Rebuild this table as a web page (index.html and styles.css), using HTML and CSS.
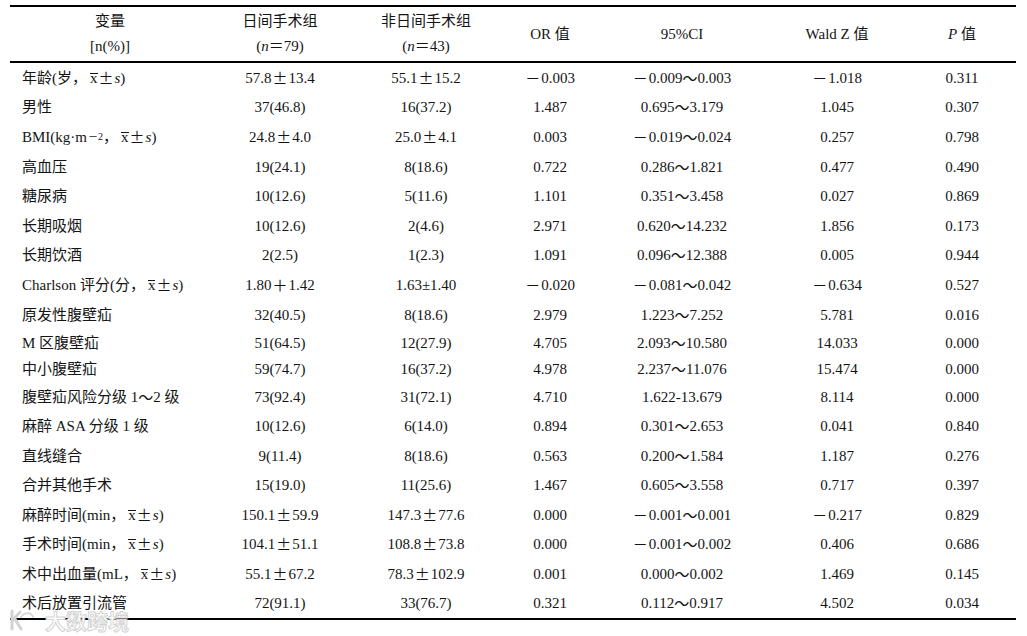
FILE: index.html
```html
<!DOCTYPE html>
<html lang="zh-CN">
<head>
<meta charset="utf-8">
<title>表</title>
<link rel="stylesheet" href="styles.css">
</head>
<body>
<div class="page">
  <div class="table">
    <div class="th lead"><span>变量</span><span>[n(%)]</span></div>
    <div class="th"><span>日间手术组</span><span>(<i>n</i>＝79)</span></div>
    <div class="th"><span>非日间手术组</span><span>(<i>n</i>＝43)</span></div>
    <div class="th">OR 值</div>
    <div class="th">95%CI</div>
    <div class="th">Wald Z 值</div>
    <div class="th"><span><i>P</i> 值</span></div>

    <div class="td name">年龄(岁，<span class="xb">x</span><span class="pm">±</span><i>s</i>)</div><div class="td">57.8<span class="pm">±</span>13.4</div><div class="td">55.1<span class="pm">±</span>15.2</div><div class="td"><span class="mn">－</span>0.003</div><div class="td"><span class="mn">－</span>0.009<span class="tl">～</span>0.003</div><div class="td"><span class="mn">－</span>1.018</div><div class="td">0.311</div>

    <div class="td name">男性</div><div class="td">37(46.8)</div><div class="td">16(37.2)</div><div class="td">1.487</div><div class="td">0.695<span class="tl">～</span>3.179</div><div class="td">1.045</div><div class="td">0.307</div>

    <div class="td name">BMI(kg·m<sup>－2</sup>，<span class="xb">x</span><span class="pm">±</span><i>s</i>)</div><div class="td">24.8<span class="pm">±</span>4.0</div><div class="td">25.0<span class="pm">±</span>4.1</div><div class="td">0.003</div><div class="td"><span class="mn">－</span>0.019<span class="tl">～</span>0.024</div><div class="td">0.257</div><div class="td">0.798</div>

    <div class="td name">高血压</div><div class="td">19(24.1)</div><div class="td">8(18.6)</div><div class="td">0.722</div><div class="td">0.286<span class="tl">～</span>1.821</div><div class="td">0.477</div><div class="td">0.490</div>

    <div class="td name">糖尿病</div><div class="td">10(12.6)</div><div class="td">5(11.6)</div><div class="td">1.101</div><div class="td">0.351<span class="tl">～</span>3.458</div><div class="td">0.027</div><div class="td">0.869</div>

    <div class="td name">长期吸烟</div><div class="td">10(12.6)</div><div class="td">2(4.6)</div><div class="td">2.971</div><div class="td">0.620<span class="tl">～</span>14.232</div><div class="td">1.856</div><div class="td">0.173</div>

    <div class="td name">长期饮酒</div><div class="td">2(2.5)</div><div class="td">1(2.3)</div><div class="td">1.091</div><div class="td">0.096<span class="tl">～</span>12.388</div><div class="td">0.005</div><div class="td">0.944</div>

    <div class="td name">Charlson 评分(分，<span class="xb">x</span><span class="pm">±</span><i>s</i>)</div><div class="td">1.80<span class="pm">＋</span>1.42</div><div class="td">1.63±1.40</div><div class="td"><span class="mn">－</span>0.020</div><div class="td"><span class="mn">－</span>0.081<span class="tl">～</span>0.042</div><div class="td"><span class="mn">－</span>0.634</div><div class="td">0.527</div>

    <div class="td name">原发性腹壁疝</div><div class="td">32(40.5)</div><div class="td">8(18.6)</div><div class="td">2.979</div><div class="td">1.223<span class="tl">～</span>7.252</div><div class="td">5.781</div><div class="td">0.016</div>

    <div class="td name">M 区腹壁疝</div><div class="td">51(64.5)</div><div class="td">12(27.9)</div><div class="td">4.705</div><div class="td">2.093<span class="tl">～</span>10.580</div><div class="td">14.033</div><div class="td">0.000</div>

    <div class="td name">中小腹壁疝</div><div class="td">59(74.7)</div><div class="td">16(37.2)</div><div class="td">4.978</div><div class="td">2.237<span class="tl">～</span>11.076</div><div class="td">15.474</div><div class="td">0.000</div>

    <div class="td name">腹壁疝风险分级 1<span class="tl">～</span>2 级</div><div class="td">73(92.4)</div><div class="td">31(72.1)</div><div class="td">4.710</div><div class="td">1.622-13.679</div><div class="td">8.114</div><div class="td">0.000</div>

    <div class="td name">麻醉 ASA 分级 1 级</div><div class="td">10(12.6)</div><div class="td">6(14.0)</div><div class="td">0.894</div><div class="td">0.301<span class="tl">～</span>2.653</div><div class="td">0.041</div><div class="td">0.840</div>

    <div class="td name">直线缝合</div><div class="td">9(11.4)</div><div class="td">8(18.6)</div><div class="td">0.563</div><div class="td">0.200<span class="tl">～</span>1.584</div><div class="td">1.187</div><div class="td">0.276</div>

    <div class="td name">合并其他手术</div><div class="td">15(19.0)</div><div class="td">11(25.6)</div><div class="td">1.467</div><div class="td">0.605<span class="tl">～</span>3.558</div><div class="td">0.717</div><div class="td">0.397</div>

    <div class="td name">麻醉时间(min，<span class="xb">x</span><span class="pm">±</span><i>s</i>)</div><div class="td">150.1<span class="pm">±</span>59.9</div><div class="td">147.3<span class="pm">±</span>77.6</div><div class="td">0.000</div><div class="td"><span class="mn">－</span>0.001<span class="tl">～</span>0.001</div><div class="td"><span class="mn">－</span>0.217</div><div class="td">0.829</div>

    <div class="td name">手术时间(min，<span class="xb">x</span><span class="pm">±</span><i>s</i>)</div><div class="td">104.1<span class="pm">±</span>51.1</div><div class="td">108.8<span class="pm">±</span>73.8</div><div class="td">0.000</div><div class="td"><span class="mn">－</span>0.001<span class="tl">～</span>0.002</div><div class="td">0.406</div><div class="td">0.686</div>

    <div class="td name">术中出血量(mL，<span class="xb">x</span><span class="pm">±</span><i>s</i>)</div><div class="td">55.1<span class="pm">±</span>67.2</div><div class="td">78.3<span class="pm">±</span>102.9</div><div class="td">0.001</div><div class="td">0.000<span class="tl">～</span>0.002</div><div class="td">1.469</div><div class="td">0.145</div>

    <div class="td name">术后放置引流管</div><div class="td">72(91.1)</div><div class="td">33(76.7)</div><div class="td">0.321</div><div class="td">0.112<span class="tl">～</span>0.917</div><div class="td">4.502</div><div class="td">0.034</div>
  </div>

  <div class="watermark">
    <svg class="wm-logo" width="26" height="24" viewBox="0 0 26 24">
      <path d="M3 3 L3 21 M3 13 L11 4 M6 11 L12 21" fill="none" stroke="#d2d2d2" stroke-width="3" stroke-linecap="round"/>
      <path d="M12 9 C15 4 22 4 24 9" fill="none" stroke="#d8d8d8" stroke-width="2" stroke-linecap="round"/>
    </svg>
    <span class="wm-text">大数跨境</span>
  </div>
</div>
</body>
</html>
```

FILE: styles.css
```css
html, body {
  margin: 0;
  padding: 0;
  background: #ffffff;
}

.page {
  position: relative;
  width: 1027px;
  height: 636px;
  padding-top: 5px;
  box-sizing: border-box;
  font-family: "Liberation Serif", "Noto Sans CJK SC", serif;
  font-size: 15px;
  color: #141414;
}

.table {
  display: grid;
  margin-left: 10px;
  width: 1006px;
  grid-template-columns: 200px 140px 152px 96px 168px 142px 108px;
  grid-template-rows: 56px repeat(9, 29.6px) 26.4px 26.4px repeat(8, 29.5px);
  border-top: 2px solid #000;
  border-bottom: 2px solid #000;
}

.th {
  box-sizing: border-box;
  border-bottom: 2px solid #000;
  display: flex;
  flex-direction: column;
  align-items: center;
  justify-content: center;
  line-height: 25px;
  white-space: nowrap;
}

.td {
  display: flex;
  align-items: center;
  justify-content: center;
  white-space: nowrap;
  line-height: 20px;
}

.td.name {
  justify-content: flex-start;
  padding-left: 12px;
}

i {
  font-style: italic;
}

.xb {
  position: relative;
  margin-left: 3px;
}

.xb::before {
  content: "";
  position: absolute;
  left: 0;
  right: 0;
  top: 5px;
  border-top: 1px solid currentColor;
}

.pm {
  font-family: "Noto Sans CJK SC", sans-serif;
  margin: 0 1px;
}

.mn {
  display: inline-block;
  width: 15px;
  text-align: center;
  font-family: "Noto Sans CJK SC", sans-serif;
  margin-right: 1px;
}

.tl {
  font-family: "Noto Sans CJK SC", sans-serif;
}

sup {
  font-size: 10px;
  line-height: 0;
  vertical-align: 6px;
  margin-left: 1px;
}

.watermark {
  position: absolute;
  left: 9px;
  top: 607px;
  display: flex;
  align-items: center;
  gap: 10px;
}

.wm-text {
  font-family: "Noto Sans CJK SC", sans-serif;
  font-weight: 700;
  font-size: 21px;
  line-height: 26px;
  color: #ffffff;
  -webkit-text-stroke: 1px #d4d4d4;
}
```
